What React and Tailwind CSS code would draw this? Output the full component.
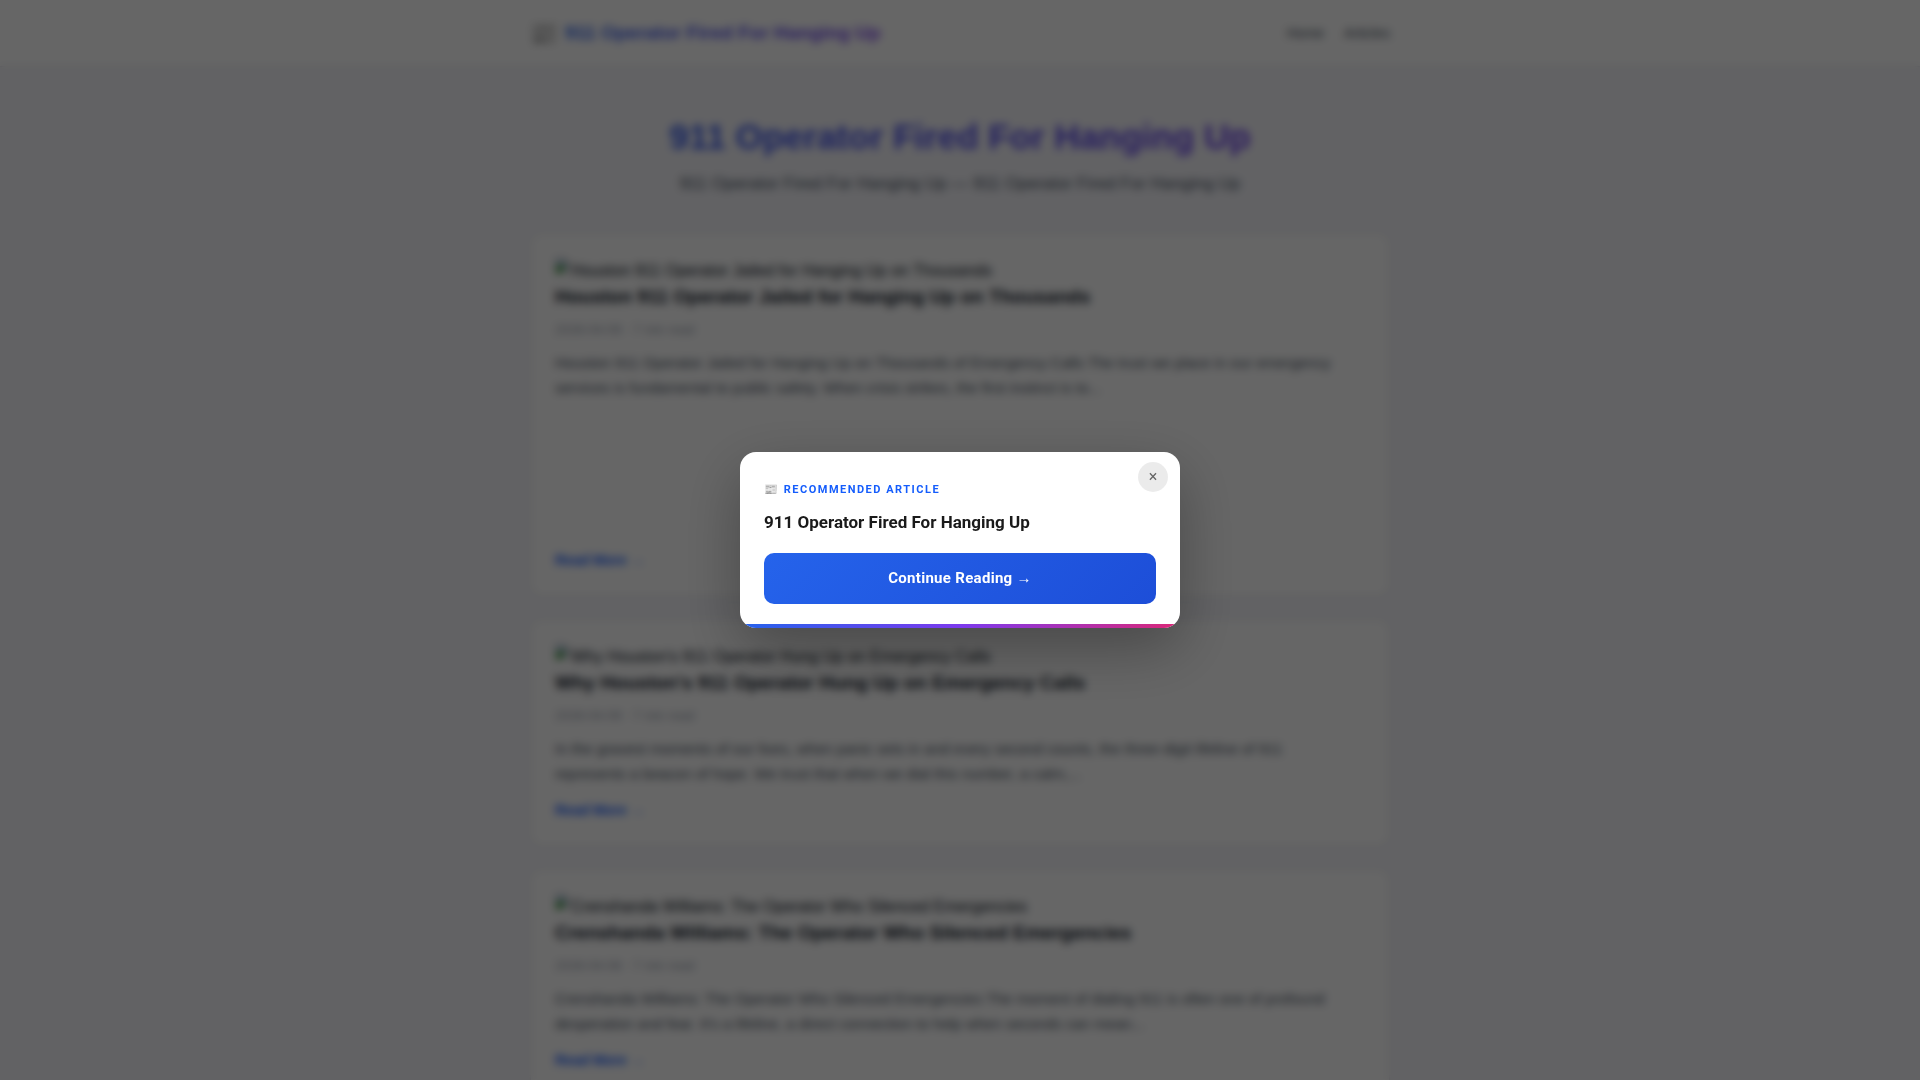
import React, { useState } from "react"

const SITE_NAME = "911 Operator Fired For Hanging Up"

const articles = [
  {
    title: "Houston 911 Operator Jailed for Hanging Up on Thousands",
    date: "2026-04-09",
    readTime: "7 min read",
    excerpt:
      "Houston 911 Operator Jailed for Hanging Up on Thousands of Emergency Calls The trust we place in our emergency services is fundamental to public safety. When crisis strikes, the first instinct is to...",
    featured: true,
  },
  {
    title: "Why Houston's 911 Operator Hung Up on Emergency Calls",
    date: "2026-04-09",
    readTime: "7 min read",
    excerpt:
      "In the gravest moments of our lives, when panic sets in and every second counts, the three-digit lifeline of 911 represents a beacon of hope. We trust that when we dial this number, a calm,...",
  },
  {
    title: "Crenshanda Williams: The Operator Who Silenced Emergencies",
    date: "2026-04-08",
    readTime: "7 min read",
    excerpt:
      "Crenshanda Williams: The Operator Who Silenced Emergencies The moment of dialing 911 is often one of profound desperation and fear. It's a lifeline, a direct connection to help when seconds can mean...",
  },
]

// Thumbnail fallback: small picture icon followed by the article title
const MissingThumbnail = ({ alt }) => (
  <div className="flex h-[26px] items-start text-base leading-[26px] text-gray-900">
    <svg width="16" height="16" viewBox="0 0 16 16" className="shrink-0" aria-hidden="true">
      <path d="M1 1h9l4 4v10H1z" fill="#c3d9f7" stroke="#909090" />
      <path d="M10 1v4h4" fill="#fff" stroke="#909090" />
      <path d="M1 15v-5l5-4 5 4-6 5z" fill="#3f9a35" />
      <path d="M8 15l7-5v5z" fill="#fff" />
    </svg>
    <span>{alt}</span>
  </div>
)

const ArticleCard = ({ article }) => (
  <article
    className={`flex flex-col rounded-xl border border-gray-200 bg-white px-6 pt-6 pb-[25px] shadow-xs ${
      article.featured ? "min-h-[364px]" : ""
    }`}
  >
    <MissingThumbnail alt={article.title} />
    <h2 className="text-[19px] leading-[26px] font-bold text-gray-900">{article.title}</h2>
    <p className="mt-[10px] text-[13px] leading-5 text-gray-400">
      {article.date} · {article.readTime}
    </p>
    <p className="mt-[10px] pr-3 text-[15px] leading-[25px] text-gray-600">{article.excerpt}</p>
    <a href="#article" className="mt-auto self-start pt-[14px] text-sm leading-[21px] font-semibold text-blue-600">
      Read More →
    </a>
  </article>
)

const RecommendedModal = ({ onClose }) => (
  <div className="fixed inset-0 z-50 flex items-center justify-center bg-black/60 backdrop-blur-xs">
    <div
      role="dialog"
      aria-modal="true"
      aria-labelledby="recommended-title"
      className="relative w-full max-w-[440px] overflow-hidden rounded-2xl bg-white px-6 pt-7 pb-6 font-[Roboto,sans-serif] shadow-[0_20px_60px_rgba(0,0,0,0.3)]"
    >
      <button
        type="button"
        aria-label="Close"
        onClick={onClose}
        className="absolute top-[10px] right-3 flex size-[30px] items-center justify-center rounded-full bg-black/8 text-base text-[#666]"
      >
        ×
      </button>
      <p className="text-[11px] leading-5 font-bold tracking-[1.5px] text-blue-600 uppercase">
        📰 Recommended Article
      </p>
      <h3 id="recommended-title" className="mt-[11px] text-[17px] leading-[22px] font-bold text-[#1a1a1a]">
        {SITE_NAME}
      </h3>
      <a
        href="#continue"
        className="mt-5 block rounded-[10px] bg-[linear-gradient(135deg,#2563eb,#1d4ed8)] py-[14px] text-center text-[15px] leading-[23px] font-bold tracking-[0.3px] text-white"
      >
        Continue Reading →
      </a>
      <div className="absolute inset-x-0 bottom-0 h-1 bg-[linear-gradient(90deg,#2563eb,#7c3aed,#db2777)]" />
    </div>
  </div>
)

const App = () => {
  const [modalOpen, setModalOpen] = useState(true)

  return (
    <div
      className={`min-h-screen bg-[#f5f5fa] font-['Liberation_Sans',sans-serif] text-gray-800 ${
        modalOpen ? "h-screen overflow-hidden" : ""
      }`}
    >
      <header className="border-b border-gray-200 bg-white">
        <div className="mx-auto flex h-[66px] max-w-[900px] items-center justify-between px-5">
          <a href="#home" className="flex items-center gap-2 text-[19px] font-bold">
            <span className="text-[22px]">📰</span>
            <span className="bg-[linear-gradient(135deg,#2563eb,#7c3aed)] bg-clip-text text-transparent">
              {SITE_NAME}
            </span>
          </a>
          <nav className="flex gap-5 text-sm font-medium text-gray-600">
            <a href="#home">Home</a>
            <a href="#articles">Articles</a>
          </nav>
        </div>
      </header>

      <main className="mx-auto max-w-[900px] px-5 pt-10">
        <section className="mb-9 text-center">
          <h1 className="bg-[linear-gradient(135deg,#2563eb,#7c3aed)] bg-clip-text text-[35px] leading-[60px] font-bold text-transparent">
            {SITE_NAME}
          </h1>
          <p className="mt-1 text-[17px] leading-[26px] text-gray-600">
            {SITE_NAME} — {SITE_NAME}
          </p>
        </section>
        <div className="flex flex-col gap-[22px]">
          {articles.map((article) => (
            <ArticleCard key={article.title} article={article} />
          ))}
        </div>
      </main>

      {modalOpen && <RecommendedModal onClose={() => setModalOpen(false)} />}
    </div>
  )
}

export default App
